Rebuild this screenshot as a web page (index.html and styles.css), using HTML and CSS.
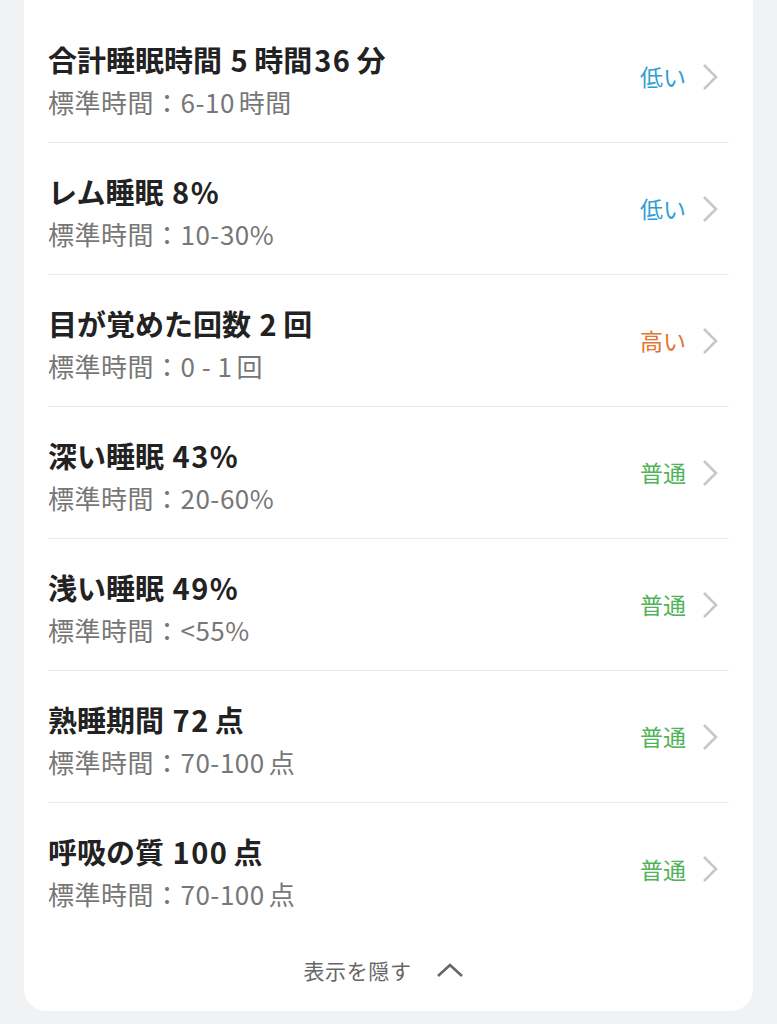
FILE: index.html
```html
<!DOCTYPE html>
<html lang="ja">
<head>
    <meta charset="UTF-8">
    <meta name="viewport" content="width=device-width, initial-scale=1.0">
    <title>睡眠の詳細</title>
    <link rel="stylesheet" href="styles.css">
</head>
<body>
    <div class="card">
        <div class="row">
            <div class="info">
                <div class="title">合計睡眠時間 <span class="num">5</span>時間<span class="num">36</span>分</div>
                <div class="range">標準時間：6-<span class="num">10</span>時間</div>
            </div>
            <span class="status low">低い</span>
            <svg class="chevron" viewBox="0 0 18 28"><path d="M3 2 L15 14 L3 26"/></svg>
        </div>
        <div class="row">
            <div class="info">
                <div class="title">レム睡眠 <span class="num">8%</span></div>
                <div class="range">標準時間：10-30%</div>
            </div>
            <span class="status low">低い</span>
            <svg class="chevron" viewBox="0 0 18 28"><path d="M3 2 L15 14 L3 26"/></svg>
        </div>
        <div class="row">
            <div class="info">
                <div class="title">目が覚めた回数 <span class="num">2</span>回</div>
                <div class="range">標準時間：0 - <span class="num">1</span>回</div>
            </div>
            <span class="status high">高い</span>
            <svg class="chevron" viewBox="0 0 18 28"><path d="M3 2 L15 14 L3 26"/></svg>
        </div>
        <div class="row">
            <div class="info">
                <div class="title">深い睡眠 <span class="num">43%</span></div>
                <div class="range">標準時間：20-60%</div>
            </div>
            <span class="status normal">普通</span>
            <svg class="chevron" viewBox="0 0 18 28"><path d="M3 2 L15 14 L3 26"/></svg>
        </div>
        <div class="row">
            <div class="info">
                <div class="title">浅い睡眠 <span class="num">49%</span></div>
                <div class="range">標準時間：&lt;55%</div>
            </div>
            <span class="status normal">普通</span>
            <svg class="chevron" viewBox="0 0 18 28"><path d="M3 2 L15 14 L3 26"/></svg>
        </div>
        <div class="row">
            <div class="info">
                <div class="title">熟睡期間 <span class="num">72</span>点</div>
                <div class="range">標準時間：70-<span class="num">100</span>点</div>
            </div>
            <span class="status normal">普通</span>
            <svg class="chevron" viewBox="0 0 18 28"><path d="M3 2 L15 14 L3 26"/></svg>
        </div>
        <div class="row last">
            <div class="info">
                <div class="title">呼吸の質 <span class="num">100</span>点</div>
                <div class="range">標準時間：70-<span class="num">100</span>点</div>
            </div>
            <span class="status normal">普通</span>
            <svg class="chevron" viewBox="0 0 18 28"><path d="M3 2 L15 14 L3 26"/></svg>
        </div>
        <div class="toggle">
            <span>表示を隠す</span>
            <svg class="caret" viewBox="0 0 28 16"><path d="M2 14 L14 3 L26 14"/></svg>
        </div>
    </div>
</body>
</html>
```

FILE: styles.css
```css
body {
    margin: 0;
    padding: 0;
    background-color: #f1f2f4;
    font-family: "Noto Sans CJK JP", "Noto Sans", sans-serif;
    color: #222;
}
.card {
    margin: -20px 24px 0;
    padding: 31px 24px 0;
    background-color: #fff;
    border-radius: 22px;
}
.row {
    display: flex;
    align-items: center;
    height: 132px;
    border-bottom: 1px solid #ebebeb;
    box-sizing: border-box;
}
.row.last {
    border-bottom: none;
}
.info {
    flex: 1;
    padding-top: 4px;
}
.title {
    font-size: 29px;
    font-weight: 700;
    line-height: 40px;
    color: #222;
}
.title .num {
    margin: 0 5px 0 2px;
    letter-spacing: 1.5px;
}
.range {
    font-size: 26px;
    line-height: 34px;
    margin-top: 6px;
    letter-spacing: 0.5px;
    color: #777;
}
.range .num {
    margin-right: 4px;
}
.status {
    font-size: 23px;
    margin-right: 15px;
    margin-top: -1px;
}
.low {
    color: #2f9ed6;
}
.high {
    color: #e3742f;
}
.normal {
    color: #4fb358;
}
.chevron {
    width: 18px;
    height: 28px;
    margin-right: 10px;
    fill: none;
    stroke: #c8c8cc;
    stroke-width: 2.6;
}
.toggle {
    display: flex;
    justify-content: center;
    align-items: center;
    gap: 24px;
    height: 70px;
    padding: 0 10px 6px 0;
    font-size: 21px;
    letter-spacing: 0.6px;
    color: #666;
}
.caret {
    width: 28px;
    height: 16px;
    fill: none;
    stroke: #666;
    stroke-width: 2.6;
}
```
